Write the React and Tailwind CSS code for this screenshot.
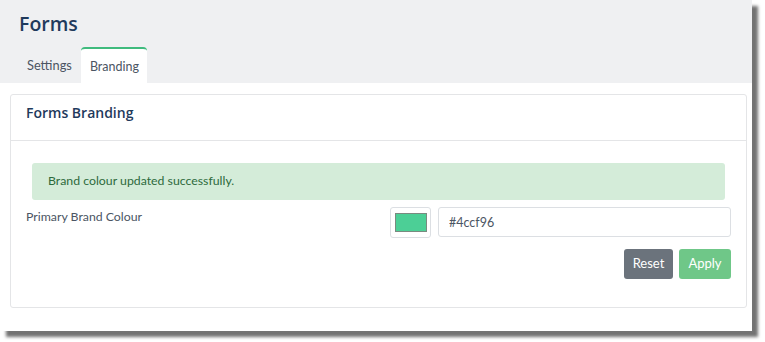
import React, { useState } from "react";

export default function App() {
  const [colour, setColour] = useState("#4ccf96");
  const [tab] = useState("Branding");

  return (
    <div className="w-[765px] h-[342px] bg-white font-['Lato',sans-serif] overflow-hidden">
      <div className="w-[752px] h-[331px] bg-white flex flex-col shadow-[6px_6px_3px_rgba(0,0,0,0.55)]">
        {/* page header */}
        <div className="bg-[#eff0f2] h-[83px] flex flex-col shrink-0">
          <h1 className="pl-[19px] pt-[10px] text-[19.5px] leading-[28px] font-semibold text-[#1f3a5c] font-['Open_Sans',sans-serif]">
            Forms
          </h1>
          <div className="flex mt-auto pl-[17px]">
            <div className="pl-[10px] pr-[9px] h-[36px] flex items-center text-[12.8px] text-[#4b5563] pt-[2px]">
              Settings
            </div>
            <div
              className={`h-[36px] pl-[9px] pr-[8px] flex items-center text-[12.5px] text-[#4b5563] pt-[2px] ${
                tab === "Branding" ? "bg-white border-t-2 border-[#3fbb7e] rounded-t-sm" : ""
              }`}
            >
              Branding
            </div>
          </div>
        </div>

        {/* card */}
        <div className="pl-[10px] pr-[5px] pt-[11px]">
          <div className="border border-[#e4e5e7] rounded-[3px] h-[214px] flex flex-col">
            <div className="h-[46px] border-b border-[#e4e5e7] px-[15px] flex items-center">
              <h2 className="text-[14px] font-semibold text-[#1f3a5c] -mt-[10px] font-['Open_Sans',sans-serif]">Forms Branding</h2>
            </div>
            <div className="px-[15px] pt-[22px]">
              <div className="mx-[6px] h-[37px] bg-[#d4ecd9] rounded-[3px] px-[16px] flex items-center text-[12.3px] text-[#2d6a3c]">
                Brand colour updated successfully.
              </div>
              <div className="flex items-start mt-[7px]">
                <label className="text-[12.3px] text-[#4b5563] pt-[1px] flex-1">Primary Brand Colour</label>
                <div className="w-[41px] h-[31px] border border-[#dcdfe3] rounded-[3px] flex items-center justify-center">
                  <div className="w-[32px] h-[19px] border border-[#7a8a80]" style={{ background: colour }} />
                </div>
                <input
                  value={colour}
                  onChange={(e) => setColour(e.target.value)}
                  className="ml-[7px] w-[293px] h-[30px] border border-[#dcdfe3] rounded-[3px] px-[10px] text-[12.5px] text-[#4b5563] outline-none"
                />
              </div>
              <div className="flex justify-end gap-[6px] mt-[11px]">
                <button className="w-[49px] h-[30px] rounded-[3px] bg-[#6b737c] text-white text-[13px]">
                  Reset
                </button>
                <button className="w-[52px] h-[30px] rounded-[3px] bg-[#6fc788] text-white text-[13px]">
                  Apply
                </button>
              </div>
            </div>
          </div>
        </div>
      </div>
    </div>
  );
}
